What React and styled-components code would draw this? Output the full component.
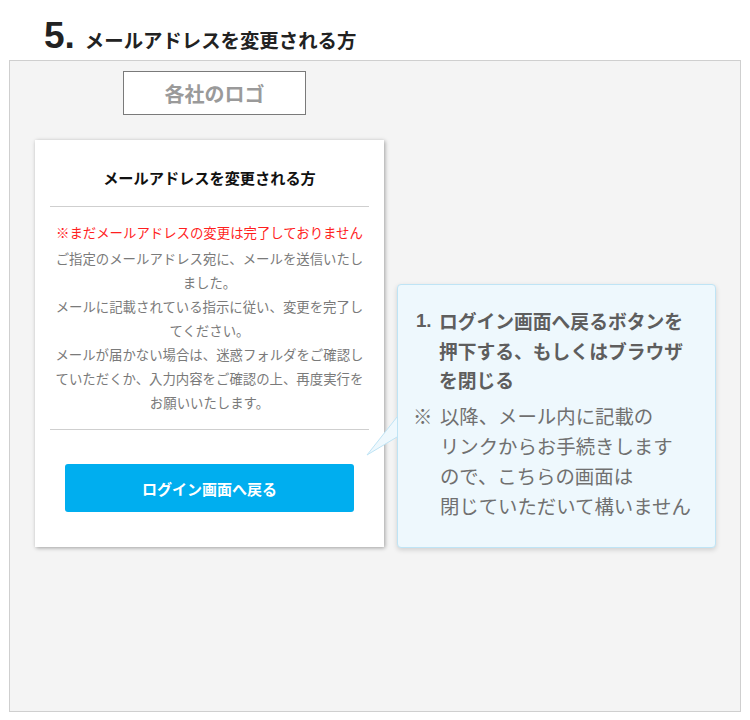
import styled, { createGlobalStyle } from "styled-components";

const GlobalStyle = createGlobalStyle`
  html, body {
    margin: 0;
    padding: 0;
    background: #fff;
    font-family: "Noto Sans CJK JP", "Noto Sans", sans-serif;
  }
`;

export default function App() {
  return (
    <>
      <GlobalStyle />
      <Header>
        <StepNo>5.</StepNo>
        <StepTitle>メールアドレスを変更される方</StepTitle>
      </Header>
      <Panel>
        <Column>
          <LogoBox>各社のロゴ</LogoBox>
          <Card>
            <CardTitle>メールアドレスを変更される方</CardTitle>
            <Divider />
            <CardBody>
              <Warning>※まだメールアドレスの変更は完了しておりません</Warning>
              <Line>ご指定のメールアドレス宛に、メールを送信いたし</Line>
              <Line>ました。</Line>
              <Line>メールに記載されている指示に従い、変更を完了し</Line>
              <Line>てください。</Line>
              <Line>メールが届かない場合は、迷惑フォルダをご確認し</Line>
              <Line>ていただくか、入力内容をご確認の上、再度実行を</Line>
              <Line>お願いいたします。</Line>
            </CardBody>
            <Divider />
            <ButtonArea>
              <LoginButton type="button">ログイン画面へ戻る</LoginButton>
            </ButtonArea>
          </Card>
        </Column>
        <Callout>
          <Tail width="32" height="40" viewBox="0 0 32 40">
            <polygon points="31,0 1,38 31,20" fill="#eef8fd" />
            <polyline points="31,0 1,38 31,20" fill="none" stroke="#bfe4f5" strokeWidth="1" />
          </Tail>
          <StepItem>
            <Mark $bold>1.</Mark>
            <span>
              ログイン画面へ戻るボタンを
              <br />
              押下する、もしくはブラウザ
              <br />
              を閉じる
            </span>
          </StepItem>
          <NoteItem>
            <Mark>※</Mark>
            <span>
              以降、メール内に記載の
              <br />
              リンクからお手続きします
              <br />
              ので、こちらの画面は
              <br />
              閉じていただいて構いません
            </span>
          </NoteItem>
        </Callout>
      </Panel>
    </>
  );
}

const Header = styled.header`
  display: flex;
  align-items: baseline;
  gap: 10px;
  height: 60px;
  box-sizing: border-box;
  padding: 16px 0 0 44px;
`;

const StepNo = styled.span`
  font-family: "Liberation Sans", Arial, sans-serif;
  font-weight: 700;
  font-size: 37px;
  line-height: 40px;
  color: #222;
`;

const StepTitle = styled.h1`
  margin: 0;
  font-size: 19.4px;
  font-weight: 700;
  color: #222;
  line-height: 40px;
`;

const Panel = styled.section`
  display: flex;
  gap: 13px;
  margin: 0 9px;
  height: 652px;
  box-sizing: border-box;
  padding: 10px 24px 0 25px;
  background: #f4f4f4;
  border: 1px solid #cfcfcf;
  align-items: flex-start;
`;

const Column = styled.div`
  display: flex;
  flex-direction: column;
  gap: 25px;
  width: 350px;
`;

const LogoBox = styled.div`
  width: 183px;
  height: 44px;
  box-sizing: border-box;
  margin-left: 88px;
  display: flex;
  align-items: center;
  justify-content: center;
  background: #fff;
  border: 1px solid #7a7a7a;
  color: #9a9a9a;
  font-size: 20px;
  font-weight: 700;
`;

const Card = styled.div`
  background: #fff;
  padding: 0 15px 35px;
  box-shadow: 1px 1px 4px rgba(0, 0, 0, 0.35);
`;

const CardTitle = styled.h2`
  margin: 0;
  padding: 26px 0 18px;
  text-align: center;
  font-size: 15.2px;
  line-height: 22px;
  font-weight: 700;
  color: #111;
`;

const Divider = styled.hr`
  margin: 0;
  border: 0;
  border-top: 1px solid #cfcfcf;
`;

const CardBody = styled.div`
  padding: 13px 0 15px;
  text-align: center;
  font-size: 13.4px;
  line-height: 24px;
  color: #7a7a7a;
`;

const Line = styled.div`
  white-space: nowrap;
`;

const Warning = styled(Line)`
  color: #ff1f1f;
  margin-bottom: 2px;
`;

const ButtonArea = styled.div`
  padding: 34px 15px 0;
`;

const LoginButton = styled.button`
  display: block;
  width: 100%;
  height: 48px;
  border: 0;
  border-radius: 3px;
  background: #00aeef;
  color: #fff;
  font-family: inherit;
  font-size: 15px;
  font-weight: 700;
  cursor: pointer;
`;

const Callout = styled.div`
  position: relative;
  width: 320px;
  box-sizing: border-box;
  margin-top: 213px;
  padding: 21px 10px 26px 15px;
  background: #eef8fd;
  border: 1px solid #bfe4f5;
  border-radius: 4px;
  box-shadow: 0 2px 5px rgba(0, 0, 0, 0.15);
  color: #6a6a6a;
`;

const Tail = styled.svg`
  position: absolute;
  left: -32px;
  top: 132px;
  overflow: visible;
`;

const StepItem = styled.div`
  display: flex;
  font-size: 18.8px;
  line-height: 29.5px;
  font-weight: 700;
  color: #5e5e5e;
  padding-left: 3px;
`;

const NoteItem = styled.div`
  display: flex;
  margin-top: 6px;
  font-size: 19.4px;
  line-height: 30px;
  color: #707070;
  white-space: nowrap;
`;

const Mark = styled.span`
  flex: 0 0 auto;
  width: ${(p) => (p.$bold ? "23px" : "27px")};
  font-family: ${(p) => (p.$bold ? '"Liberation Sans", Arial, sans-serif' : "inherit")};
`;
